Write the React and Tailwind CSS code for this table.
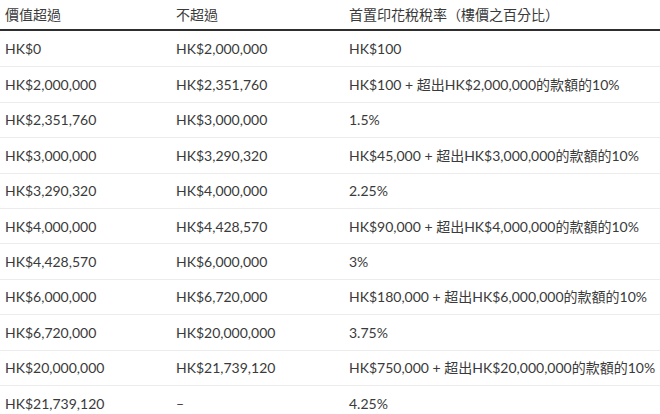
const rows = [
  ["HK$0", "HK$2,000,000", "HK$100"],
  ["HK$2,000,000", "HK$2,351,760", "HK$100 + 超出HK$2,000,000的款額的10%"],
  ["HK$2,351,760", "HK$3,000,000", "1.5%"],
  ["HK$3,000,000", "HK$3,290,320", "HK$45,000 + 超出HK$3,000,000的款額的10%"],
  ["HK$3,290,320", "HK$4,000,000", "2.25%"],
  ["HK$4,000,000", "HK$4,428,570", "HK$90,000 + 超出HK$4,000,000的款額的10%"],
  ["HK$4,428,570", "HK$6,000,000", "3%"],
  ["HK$6,000,000", "HK$6,720,000", "HK$180,000 + 超出HK$6,000,000的款額的10%"],
  ["HK$6,720,000", "HK$20,000,000", "3.75%"],
  ["HK$20,000,000", "HK$21,739,120", "HK$750,000 + 超出HK$20,000,000的款額的10%"],
  ["HK$21,739,120", "–", "4.25%"],
];

export default function App() {
  return (
    <div
      className="w-[660px] h-[414px] overflow-hidden bg-white text-[#3a3a3a] text-[14px]"
      style={{ fontFamily: 'Lato, "Noto Sans CJK TC", sans-serif' }}
    >
      {/* Header */}
      <div className="flex h-[31px] items-center border-b-[2px] border-[#2e2e2e]">
        <div className="w-[176px] pl-[5px] shrink-0">價值超過</div>
        <div className="w-[173px] shrink-0">不超過</div>
        <div className="flex-1">首置印花稅稅率（樓價之百分比）</div>
      </div>

      {rows.map((r, i) => (
        <div
          key={i}
          className={
            "flex h-[35.4px] items-center " +
            (i > 0 ? "border-t border-[#ececec]" : "")
          }
        >
          <div className="w-[176px] pl-[5px] shrink-0">{r[0]}</div>
          <div className="w-[173px] shrink-0">{r[1]}</div>
          <div className="flex-1 whitespace-nowrap">{r[2]}</div>
        </div>
      ))}
    </div>
  );
}
